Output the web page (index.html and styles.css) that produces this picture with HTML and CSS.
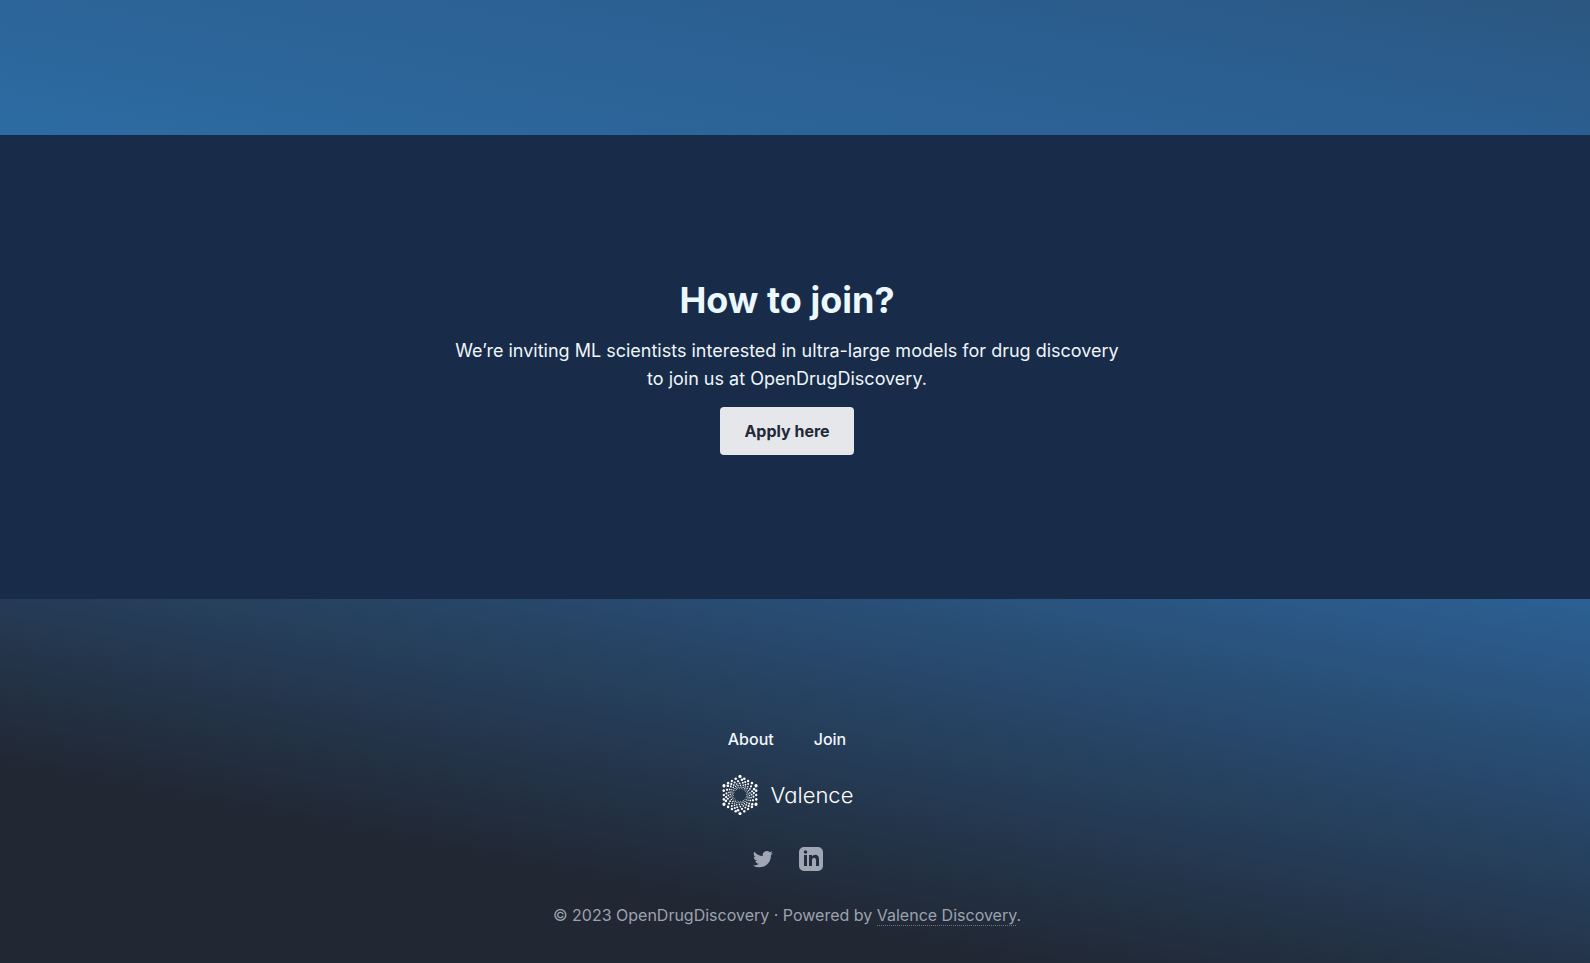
FILE: index.html
```html
<!DOCTYPE html>
<html lang="en">

<head>
    <meta charset="UTF-8">
    <meta name="viewport" content="width=device-width, initial-scale=1.0">
    <title>OpenDrugDiscovery</title>
    <link rel="stylesheet" href="styles.css">
</head>

<body>
    <div class="banner"></div>

    <section class="join" id="join">
        <h2>How to join?</h2>
        <p>We’re inviting ML scientists interested in ultra-large models for drug discovery to join us at OpenDrugDiscovery.</p>
        <a class="apply" href="#apply">Apply here</a>
    </section>

    <footer class="footer">
        <nav class="links">
            <a href="#about">About</a>
            <a href="#join">Join</a>
        </nav>

        <a class="logo" href="#valence">
            <svg width="38" height="40" viewBox="-19 -20 38 40" fill="#fff" aria-hidden="true">
                <defs>
                    <!-- one sixth of the mark -->
                    <g id="sector">
                        <circle cx="0" cy="-18.5" r="1.6" />
                        <circle cx="1.9" cy="-15.2" r="1.3" />
                        <circle cx="2.8" cy="-12.3" r="1" />
                        <circle cx="3.2" cy="-9.7" r="0.8" />
                        <circle cx="3.1" cy="-7.6" r="0.6" />
                        <circle cx="2.9" cy="-5.9" r="0.4" />
                        <circle cx="4.3" cy="-16.2" r="1.3" />
                        <circle cx="5.2" cy="-13" r="1.1" />
                        <circle cx="5.5" cy="-10.3" r="0.9" />
                        <circle cx="5.3" cy="-8.1" r="0.7" />
                        <circle cx="4.8" cy="-6.3" r="0.6" />
                        <circle cx="4.3" cy="-5" r="0.4" />
                        <circle cx="8.1" cy="-14" r="1.2" />
                        <circle cx="8.2" cy="-10.9" r="1" />
                        <circle cx="7.8" cy="-8.3" r="0.8" />
                        <circle cx="7.1" cy="-6.4" r="0.7" />
                        <circle cx="6.2" cy="-4.9" r="0.5" />
                        <circle cx="5.5" cy="-3.7" r="0.4" />
                        <circle cx="11.9" cy="-11.9" r="1.3" />
                        <circle cx="11" cy="-8.6" r="1.1" />
                        <circle cx="9.9" cy="-6.2" r="0.9" />
                        <circle cx="8.6" cy="-4.4" r="0.7" />
                        <circle cx="7.3" cy="-3.1" r="0.6" />
                        <circle cx="6.2" cy="-2.1" r="0.4" />
                    </g>
                </defs>
                <use href="#sector" />
                <use href="#sector" transform="rotate(60)" />
                <use href="#sector" transform="rotate(120)" />
                <use href="#sector" transform="rotate(180)" />
                <use href="#sector" transform="rotate(240)" />
                <use href="#sector" transform="rotate(300)" />
            </svg>
            <span>Valence</span>
        </a>

        <div class="social">
            <a href="#twitter" aria-label="Twitter">
                <svg width="24" height="24" viewBox="0 0 24 24" fill="currentColor">
                    <path d="M22 5.900c-.7.3-1.500.6-2.400.7.9-.5 1.500-1.300 1.800-2.300-.8.5-1.700.8-2.600 1a4.100 4.100 0 0 0-7 3.700C8.400 8.900 5.400 7.200 3.400 4.700a4.100 4.100 0 0 0 1.300 5.500c-.7 0-1.300-.2-1.900-.5 0 2 1.400 3.700 3.300 4.100-.6.2-1.200.2-1.900.1.500 1.600 2 2.800 3.900 2.900A8.300 8.300 0 0 1 2 18.400a11.600 11.600 0 0 0 6.300 1.900c7.500 0 11.900-6.400 11.600-12.200.8-.6 1.500-1.300 2.100-2.200z" />
                </svg>
            </a>
            <a href="#linkedin" aria-label="LinkedIn">
                <svg width="24" height="24" viewBox="0 0 24 24" fill="currentColor" fill-rule="evenodd">
                    <path d="M5 0h14a5 5 0 0 1 5 5v14a5 5 0 0 1-5 5H5a5 5 0 0 1-5-5V5a5 5 0 0 1 5-5zM5 8v11h3V8zM6.500 3.200a1.750 1.750 0 1 0 0 3.500a1.750 1.750 0 1 0 0-3.500zM10 8v11h3v-5.600c0-3.400 4-3.600 4 0V19h3v-7c0-5.400-5.700-5.200-7-2.500V8z" />
                </svg>
            </a>
        </div>

        <p class="copyright">© 2023 OpenDrugDiscovery · Powered by <a href="#discovery">Valence Discovery</a>.</p>
    </footer>
</body>

</html>
```

FILE: styles.css
```css
body {
    margin: 0;
    min-height: 100vh;
    display: flex;
    flex-direction: column;
    background: #212733;
    color: #eef6fa;
    font-family: Inter, "Liberation Sans", sans-serif;
    font-size: 16px;
    line-height: 24px;
}

h2,
p {
    margin: 0;
}

a {
    color: inherit;
    text-decoration: none;
}

.banner {
    height: 135px;
    background: linear-gradient(191deg, #2b5780, #2b5e91 32%, #2c6599 72%, #2c6ca3);
}

.join,
.footer {
    display: flex;
    flex-direction: column;
    align-items: center;
    text-align: center;
}

.join {
    padding: 144px 16px 144px 0;
    background: #182b48;
}

.join h2 {
    margin-bottom: 16px;
    font-size: 36px;
    line-height: 42px;
    font-weight: 700;
    color: #ebf8ff;
}

.join p {
    max-width: 680px;
    margin-bottom: 14px;
    font-size: 18px;
    line-height: 28px;
}

.apply {
    padding: 12px 24px;
    border-radius: 4px;
    background: #e5e7eb;
    color: #1f2937;
    font-weight: 700;
}

.footer {
    flex-grow: 1;
    padding: 128px 16px 36px 0;
    background: linear-gradient(191deg, #2c6094, #212733 71%);
}

.links {
    display: flex;
    gap: 40px;
    margin-bottom: 24px;
    font-weight: 500;
}

.logo {
    display: flex;
    align-items: center;
    gap: 12px;
    margin-bottom: 32px;
    color: #fff;
    font-size: 22px;
    font-weight: 300;
    font-feature-settings: "cv11";
}

.social {
    display: flex;
    gap: 24px;
    margin-bottom: 32px;
    color: #a0a6b4;
}

.social svg {
    display: block;
}

.copyright {
    color: #9ca3af;
}

.copyright a {
    border-bottom: 1px dotted #6b7280;
}
```
